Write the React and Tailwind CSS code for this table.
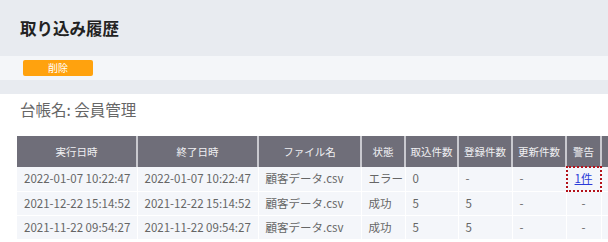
export default function App() {
    const rows = [
        { start: '2022-01-07 10:22:47', end: '2022-01-07 10:22:47', file: '顧客データ.csv', status: 'エラー', imported: '0', registered: '-', updated: '-', warning: '1件' },
        { start: '2021-12-22 15:14:52', end: '2021-12-22 15:14:52', file: '顧客データ.csv', status: '成功', imported: '5', registered: '5', updated: '-', warning: '-' },
        { start: '2021-11-22 09:54:27', end: '2021-11-22 09:54:27', file: '顧客データ.csv', status: '成功', imported: '5', registered: '5', updated: '-', warning: '-' },
    ];

    const headers = [
        { label: '実行日時', w: 'w-[120px]' },
        { label: '終了日時', w: 'w-[121px]' },
        { label: 'ファイル名', w: 'w-[103px]' },
        { label: '状態', w: 'w-[44px]' },
        { label: '取込件数', w: 'w-[53px]' },
        { label: '登録件数', w: 'w-[54px]' },
        { label: '更新件数', w: 'w-[54px]' },
        { label: '警告', w: 'w-[35px]' },
        { label: '', w: 'w-[60px]' },
    ];

    const cell = 'h-[24px] border-r border-b border-white px-[7px] text-left font-normal whitespace-nowrap';

    return (
        <div
            className="h-[242px] w-[608px] overflow-hidden bg-white text-[#666]"
            style={{ fontFamily: '"Noto Sans CJK JP", "Noto Sans", sans-serif' }}
        >
            <div className="flex h-[56px] items-center bg-[#e8ebf0] px-[20px]">
                <h1 className="text-[16.5px] font-bold leading-none text-[#222]">取り込み履歴</h1>
            </div>
            <div className="flex h-[24px] items-center bg-[#f4f6f9] px-[23px]">
                <button className="flex h-[16px] w-[70px] items-center justify-center rounded-[2px] bg-[#ffa20e] text-[10px] leading-none text-white">
                    削除
                </button>
            </div>
            <div className="h-[14px] bg-[#e8ebf0]" />

            <div className="px-[20px] pt-[5px]">
                <p className="text-[15.5px] leading-[20px] text-[#666]">台帳名: 会員管理</p>
            </div>

            <div className="w-[700px] pl-[17px] pt-[17px]">
                <table className="w-[644px] table-fixed border-collapse text-[11.5px]">
                    <colgroup>
                        {headers.map((h, i) => (
                            <col key={i} className={h.w} />
                        ))}
                    </colgroup>
                    <thead>
                        <tr className="bg-[#6f6e79] text-[#f0f0f3]">
                            {headers.map((h, i) => (
                                <th
                                    key={i}
                                    className="h-[31px] border-r-2 border-[#c9c9cf] px-0 text-center text-[10.5px] font-normal whitespace-nowrap"
                                >
                                    {h.label}
                                </th>
                            ))}
                        </tr>
                    </thead>
                    <tbody>
                        {rows.map((r, i) => (
                            <tr key={i} className="bg-[#f4f6fa]">
                                <td className={cell}>{r.start}</td>
                                <td className={cell}>{r.end}</td>
                                <td className={cell}>{r.file}</td>
                                <td className={cell}>{r.status}</td>
                                <td className={cell}>{r.imported}</td>
                                <td className={cell}>{r.registered}</td>
                                <td className={cell}>{r.updated}</td>
                                <td className="h-[24px] border-r border-b border-white p-0 text-center">
                                    {r.warning === '-' ? (
                                        '-'
                                    ) : (
                                        <span className="flex h-[24px] items-center justify-center outline-2 outline-dotted outline-[#b3121a] -outline-offset-1">
                                            <a href="#" className="text-[#2a3bd8] underline">
                                                {r.warning}
                                            </a>
                                        </span>
                                    )}
                                </td>
                                <td className={cell}></td>
                            </tr>
                        ))}
                    </tbody>
                </table>
            </div>
        </div>
    );
}
